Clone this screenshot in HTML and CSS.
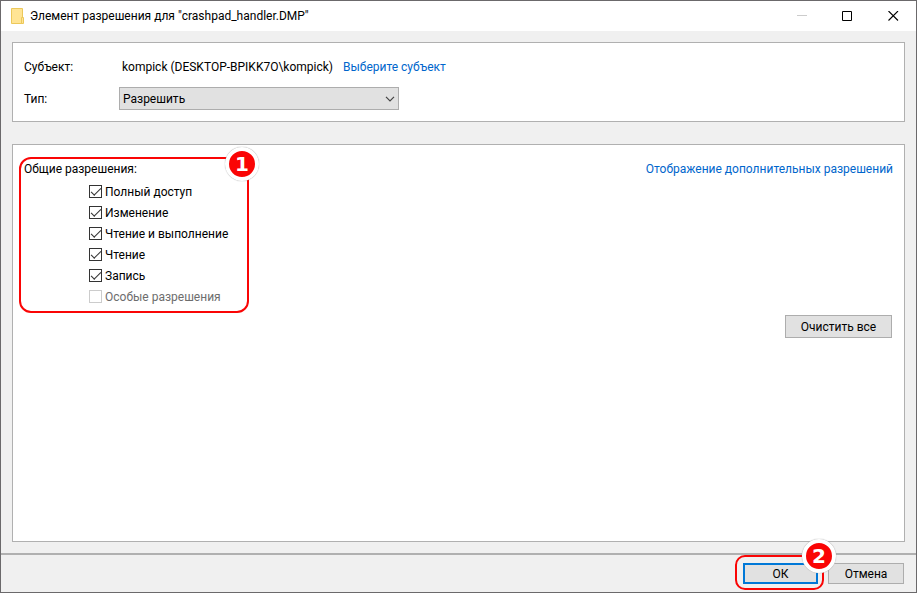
FILE: index.html
```html
<!DOCTYPE html>
<html lang="ru">
<head>
<meta charset="utf-8">
<title>Элемент разрешения</title>
<link rel="stylesheet" href="styles.css">
</head>
<body>
<div class="window">
  <header class="titlebar">
    <svg class="folder" width="14" height="16" viewBox="0 0 14 16" aria-hidden="true">
      <path d="M.5.5h11v15H.5z" fill="#ffe494" stroke="#ecc85a"/>
      <path d="M10.500 9.500h2v6h-2z" fill="#ffe494" stroke="#ecc85a"/>
    </svg>
    <h1 class="title">Элемент разрешения для "crashpad_handler.DMP"</h1>
    <div class="controls">
      <button type="button" class="control" aria-label="Свернуть" disabled><svg width="11" height="11" viewBox="0 0 11 11"><path d="M1 4.500h10" stroke="#ccc"/></svg></button>
      <button type="button" class="control" aria-label="Развернуть"><svg width="11" height="11" viewBox="0 0 11 11"><path d="M.5.5h9v9h-9z" fill="none" stroke="#000"/></svg></button>
      <button type="button" class="control" aria-label="Закрыть"><svg width="11" height="11" viewBox="0 0 11 11"><path d="M.5 0l9.500 9.500M10 0L.5 9.500" fill="none" stroke="#000" stroke-width="1.100"/></svg></button>
    </div>
  </header>

  <main class="content">
    <section class="panel subject">
      <span>Субъект:</span>
      <div class="principal"><span>kompick (DESKTOP-BPIKK7O\kompick)</span><a href="#">Выберите субъект</a></div>
      <label for="type">Тип:</label>
      <div class="dropdown">
        <select id="type"><option>Разрешить</option><option>Запретить</option></select>
        <svg class="chevron" width="10" height="6" viewBox="0 0 10 6" aria-hidden="true"><path d="M1 .8l4 4 4-4" fill="none" stroke="#444" stroke-width="1.200"/></svg>
      </div>
    </section>

    <section class="panel permissions">
      <fieldset class="group" aria-labelledby="group-title">
        <div id="group-title">Общие разрешения:</div>
        <div class="checks">
          <label class="check"><input type="checkbox" checked>Полный доступ</label>
          <label class="check"><input type="checkbox" checked>Изменение</label>
          <label class="check"><input type="checkbox" checked>Чтение и выполнение</label>
          <label class="check"><input type="checkbox" checked>Чтение</label>
          <label class="check"><input type="checkbox" checked>Запись</label>
          <label class="check off"><input type="checkbox" disabled>Особые разрешения</label>
        </div>
        <span class="badge">1</span>
      </fieldset>
      <div class="side">
        <a href="#">Отображение дополнительных разрешений</a>
        <button type="button" class="button clear">Очистить все</button>
      </div>
    </section>
  </main>

  <footer class="footer">
    <div class="marked">
      <button type="button" class="button primary">ОК</button>
      <span class="badge">2</span>
    </div>
    <button type="button" class="button cancel">Отмена</button>
  </footer>
</div>
</body>
</html>
```
FILE: styles.css
```css
* { box-sizing: border-box; }

body {
  margin: 0;
  color: #000;
  background: #f0f0f0;
  font: 12px/16px Roboto, "Noto Sans", sans-serif;
}

button, select { font: inherit; color: inherit; }

a { color: #0066cc; text-decoration: none; }

.window {
  display: flex;
  flex-direction: column;
  min-height: 100vh;
  border: 1px solid #6b696b;
}

.titlebar {
  display: flex;
  align-items: center;
  height: 30px;
  padding-left: 10px;
  background: #fff;
}

.folder { margin-right: 5px; }

.title { margin: 0; font-size: 12px; font-weight: 400; }

.controls { display: flex; align-self: stretch; margin-left: auto; }

.control {
  display: flex;
  align-items: center;
  justify-content: center;
  width: 46px;
  padding: 0;
  border: 0;
  background: none;
}

.content {
  display: flex;
  flex: 1;
  flex-direction: column;
  gap: 22px;
  padding: 11px;
}

.panel { border: 1px solid #b0b0b0; background: #fff; }

.subject {
  display: grid;
  grid-template-columns: 95px 1fr;
  row-gap: 12px;
  align-items: center;
  padding: 16px 11px 11px;
}

.principal { display: flex; gap: 10px; padding-left: 3px; }

.dropdown { position: relative; width: 280px; }

.dropdown select {
  display: block;
  width: 100%;
  height: 23px;
  padding: 0 3px;
  border: 1px solid #adadad;
  border-radius: 0;
  background: #e1e1e1;
  appearance: none;
}

.chevron { position: absolute; top: 9px; right: 4px; pointer-events: none; }

.permissions {
  display: flex;
  flex: 1;
  align-items: flex-start;
  justify-content: space-between;
  padding: 12px 11px 12px 6px;
}

.group {
  position: relative;
  width: 230px;
  min-width: 0;
  margin: 0;
  padding: 2px 3px 4px;
  border: 2px solid #fa0505;
  border-radius: 12px;
}

.checks { margin: 4px 0 0 65px; }

.check {
  display: flex;
  align-items: center;
  gap: 3px;
  height: 21px;
  white-space: nowrap;
}

.check input {
  display: grid;
  place-items: center;
  width: 13px;
  height: 13px;
  margin: 0;
  border: 1px solid #333;
  background: #fff;
  appearance: none;
}

.check input:checked::after {
  content: "";
  width: 9px;
  height: 4px;
  margin-bottom: 3px;
  border: solid #333;
  border-width: 0 0 1px 1px;
  transform: rotate(-45deg);
}

.check input:disabled { border-color: #ccc; }

.off { color: #6d6d6d; }

.side {
  display: flex;
  flex-direction: column;
  align-items: flex-end;
  gap: 138px;
  padding-top: 4px;
}

.button {
  height: 21px;
  padding: 0;
  border: 1px solid #adadad;
  background: #e1e1e1;
}

.clear { width: 107px; height: 23px; margin-right: 1px; }

.footer {
  display: flex;
  justify-content: flex-end;
  gap: 10px;
  padding: 8px 12px;
  border-top: 2px solid #b0b0b0;
}

.marked { position: relative; }

.marked::before {
  content: "";
  position: absolute;
  inset: -8px -6px -6px -8px;
  border: 2px solid #fa0505;
  border-radius: 10px;
}

.primary { position: relative; display: block; width: 75px; border: 2px solid #0078d7; }

.cancel { width: 76px; }

.badge {
  position: absolute;
  top: -12px;
  right: -12px;
  width: 34px;
  height: 34px;
  border: 4px solid #fff;
  border-radius: 50%;
  background: #fa0505;
  box-shadow: 0 0 1px #888;
  color: #fff;
  font: bold 20px/26px "DejaVu Sans", sans-serif;
  text-align: center;
}

.marked .badge { top: -24px; right: -18px; }
```
